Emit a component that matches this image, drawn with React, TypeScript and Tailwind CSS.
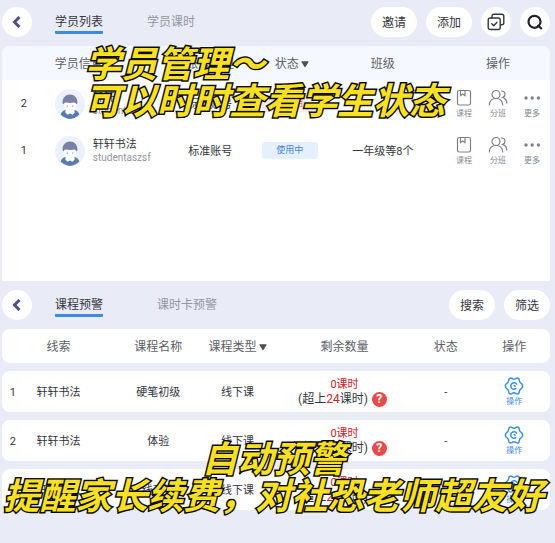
import { ReactNode } from "react";

const STUDENTS = [
  { no: 2, name: "轩轩", account: "student27", type: "标准账号", status: "已停用", active: false, classes: "" },
  { no: 1, name: "轩轩书法", account: "studentaszsf", type: "标准账号", status: "使用中", active: true, classes: "一年级等8个" },
];

const WARNINGS = [
  { no: 1, clue: "轩轩书法", course: "硬笔初级", type: "线下课", over: 24 },
  { no: 2, clue: "轩轩书法", course: "体验", type: "线下课", over: 24 },
  { no: 3, clue: "轩轩书法", course: "线下课", type: "线下课", over: 24 },
];

function BackButton() {
  return (
    <button aria-label="返回" className="w-[30px] h-[30px] shrink-0 rounded-full bg-white flex items-center justify-center">
      <svg className="w-3 h-3" viewBox="0 0 12 12" fill="none" stroke="#4d5187" strokeWidth="3">
        <path d="M8.5 1 L3.5 6 L8.5 11" />
      </svg>
    </button>
  );
}

function Tab({ label, active }: { label: string; active?: boolean }) {
  return (
    <button
      className={
        active
          ? "text-xs leading-[18px] pt-0.5 text-[#34363d] border-b-3 border-[#3d8be0] rounded-[1px]"
          : "text-xs leading-[18px] pt-0.5 text-[#93969f] border-b-3 border-transparent"
      }
    >
      {label}
    </button>
  );
}

function PillButton({ children }: { children: ReactNode }) {
  return (
    <button className="h-[30px] px-[11px] pt-0.5 rounded-full bg-white text-xs text-[#34363d]">{children}</button>
  );
}

function Caret() {
  return (
    <svg className="inline-block w-2 h-2 ml-0.5 mb-0.5" viewBox="0 0 8 8" fill="#4b4f58">
      <path d="M0.8 1.2h6.4q0.8 0 0.3 0.8L4.6 6.8q-0.6 0.8-1.2 0L0.5 2q-0.5-0.8 0.3-0.8z" />
    </svg>
  );
}

function Avatar() {
  return (
    <svg className="w-[30px] h-[30px] shrink-0" viewBox="0 0 30 30">
      <circle cx="15" cy="15" r="15" fill="#ecf1fd" />
      <path d="M5.600 25.500c1-3 2.800-4.300 5-4.600h8.800c2.200.3 4 1.600 5 4.600A15 15 0 0 1 15 30a15 15 0 0 1-9.400-4.500z" fill="#577cae" />
      <path d="M11 19.500h8l.8 4-2.300 2.300L15 24.500l-2.500 1.300-2.300-2.300z" fill="#fff" />
      <ellipse cx="15" cy="16.500" rx="6.200" ry="6" fill="#fff" />
      <path d="M7.500 13.500C7.500 8.500 10.800 5.500 15 5.500s7.500 3 7.500 8c0 .8-.3 1.400-.9 1.700-.7-1-1.500-1.500-2.400-1.700-2.800.5-5.600.5-8.400 0-.9.2-1.700.7-2.400 1.700-.6-.3-.9-.9-.9-1.700z" fill="#7b80a5" />
      <circle cx="12.200" cy="17" r="0.600" fill="#4d5187" />
      <circle cx="17.800" cy="17" r="0.600" fill="#4d5187" />
    </svg>
  );
}

function BookIcon() {
  return (
    <svg className="w-5 h-5" viewBox="0 0 20 20" fill="none" stroke="#7d8087" strokeWidth="1.200">
      <rect x="3.500" y="2.500" width="13" height="14.500" rx="1.800" />
      <path d="M6.500 2.500v5l2.200-1.600L11 7.500v-5" />
    </svg>
  );
}

function PeopleIcon() {
  return (
    <svg className="w-5 h-5" viewBox="0 0 20 20" fill="none" stroke="#7d8087" strokeWidth="1.200" strokeLinecap="round">
      <circle cx="8" cy="6.500" r="4" />
      <path d="M1.300 17c.2-3.600 2.500-6.500 6.700-6.500s6.500 2.900 6.700 6.500" />
      <path d="M13.500 3c2.200 0 3.500 1.500 3.500 3.300 0 1.500-1 2.700-2.400 3.200 2.600.7 4 2.700 4.200 5.500" />
    </svg>
  );
}

function MoreIcon() {
  return (
    <svg className="w-5 h-5" viewBox="0 0 20 20" fill="#7d8087">
      <circle cx="4" cy="10" r="1.700" />
      <circle cx="10.200" cy="10" r="1.700" />
      <circle cx="16.400" cy="10" r="1.700" />
    </svg>
  );
}

function GearIcon() {
  return (
    <svg className="w-5 h-5" viewBox="0 0 20 20" fill="none" stroke="#3b8fe0" strokeWidth="1.500" strokeLinecap="round" strokeLinejoin="round">
      <path d="M10 3.300C11.500 3.300 12 2 13.400 2S15.200 3 15.300 4.300C15.400 5.600 15.600 6.300 16.600 6.800C17.800 7.500 18.700 8.300 18.700 10S17.800 12.500 16.600 13.200C15.600 13.700 15.400 14.400 15.300 15.700C15.200 17 14.800 18 13.400 18S11.500 16.700 10 16.700S8 18 6.600 18S4.800 17 4.700 15.700C4.600 14.400 4.400 13.700 3.400 13.200C2.200 12.500 1.300 11.700 1.300 10S2.200 7.500 3.400 6.800C4.400 6.300 4.600 5.600 4.700 4.300C4.800 3 5.200 2 6.600 2S8.500 3.300 10 3.300z" />
      <path d="M12.600 8.200a3.200 3.200 0 1 0-.8 4.400" />
      <path d="M10.200 9.600q.8 0 .8.800" />
    </svg>
  );
}

function Action({ label, children, blue }: { label: string; children: ReactNode; blue?: boolean }) {
  return (
    <button
      className={
        blue
          ? "inline-flex flex-col items-center text-[8px] leading-3 text-[#3b86dc]"
          : "inline-flex flex-col items-center text-[8px] leading-3 text-[#85888f]"
      }
    >
      {children}
      {label}
    </button>
  );
}

function StudentPanel() {
  return (
    <section>
      <div className="h-[46px] pl-[2px] pr-[5px] pb-0.5 flex items-center gap-[9px]">
        <BackButton />
        <nav className="flex-1 ml-3.5 flex gap-11">
          <Tab label="学员列表" active />
          <Tab label="学员课时" />
        </nav>
        <PillButton>邀请</PillButton>
        <PillButton>添加</PillButton>
        <button aria-label="批量选择" className="w-[30px] h-[30px] rounded-full bg-white flex items-center justify-center">
          <svg className="w-[18px] h-[18px]" viewBox="0 0 18 18" fill="none" stroke="#34363d" strokeWidth="1.400" strokeLinecap="round" strokeLinejoin="round">
            <path d="M5 5V3.200Q5 1.200 7 1.200h7.800q2 0 2 2v6.600q0 2-2 2H13.500" />
            <rect x="1.200" y="5" width="12" height="11.500" rx="2" />
            <path d="M4.800 10.800l1.900 1.900 3.300-3.500" />
          </svg>
        </button>
        <button aria-label="搜索" className="w-[30px] h-[30px] rounded-full bg-white flex items-center justify-center">
          <svg className="w-[18px] h-[18px]" viewBox="0 0 18 18" fill="none" stroke="#1f2126" strokeWidth="2.200">
            <circle cx="8.500" cy="8.800" r="6" />
            <path d="M11.500 12l4.300 4" />
          </svg>
        </button>
      </div>

      <div className="ml-[2px] mr-[5px] min-h-[235px] rounded-t-lg bg-white overflow-hidden">
        <table className="w-full table-fixed text-[11px] text-[#34363d] text-center">
          <colgroup>
            <col className="w-[8%]" />
            <col className="w-[21%]" />
            <col className="w-[18%]" />
            <col className="w-[11%]" />
            <col className="w-[23%]" />
            <col className="w-[19%]" />
          </colgroup>
          <thead>
            <tr className="h-[34px] bg-[#f5f8fe] text-xs text-[#5c6068] *:font-normal *:pt-0.5">
              <th />
              <th className="text-left pl-[9px]">学员信息</th>
              <th>账号类型</th>
              <th className="whitespace-nowrap pl-1">状态<Caret /></th>
              <th>班级</th>
              <th>操作</th>
            </tr>
          </thead>
          <tbody>
            {STUDENTS.map((s) => (
              <tr key={s.no} className="h-[47px]">
                <td className="pt-0.5">{s.no}</td>
                <td className="pl-[9px]">
                  <div className="flex items-center gap-2 text-left">
                    <Avatar />
                    <div className="leading-[13px]">
                      <p>{s.name}</p>
                      <p className="text-[10px] text-[#93969f]">{s.account}</p>
                    </div>
                  </div>
                </td>
                <td className="pt-[3px]">{s.type}</td>
                <td>
                  <span
                    className={
                      s.active
                        ? "block mx-[2px] rounded-[3px] bg-[#e6effd] text-[#3f86e0] text-[9px] leading-[17px]"
                        : "block mx-[2px] rounded-[3px] bg-[#fdecee] text-[#e0626b] text-[9px] leading-[17px]"
                    }
                  >
                    {s.status}
                  </span>
                </td>
                <td className="pt-[3px]">{s.classes}</td>
                <td>
                  <div className="flex justify-center gap-3.5">
                    <Action label="课程"><BookIcon /></Action>
                    <Action label="分班"><PeopleIcon /></Action>
                    <Action label="更多"><MoreIcon /></Action>
                  </div>
                </td>
              </tr>
            ))}
          </tbody>
        </table>
      </div>
    </section>
  );
}

function WarningPanel() {
  return (
    <section>
      <div className="h-12 pl-[2px] pr-[5px] flex items-center gap-[9px]">
        <BackButton />
        <nav className="flex-1 ml-3.5 flex gap-[54px]">
          <Tab label="课程预警" active />
          <Tab label="课时卡预警" />
        </nav>
        <PillButton>搜索</PillButton>
        <PillButton>筛选</PillButton>
      </div>

      <div className="ml-[2px] mr-[5px] -mt-2">
        <table className="w-full table-fixed border-separate border-spacing-x-0 border-spacing-y-2 text-[11px] text-[#34363d] text-center">
          <colgroup>
            <col className="w-[4%]" />
            <col className="w-[17%]" />
            <col className="w-[15%]" />
            <col className="w-[14%]" />
            <col className="w-[25%]" />
            <col className="w-[12%]" />
            <col className="w-[13%]" />
          </colgroup>
          <thead>
            <tr className="h-[34px] text-xs text-[#5c6068] *:bg-white *:font-normal *:pt-0.5">
              <th className="rounded-l-lg" />
              <th className="pr-6">线索</th>
              <th>课程名称</th>
              <th className="whitespace-nowrap">课程类型<Caret /></th>
              <th>剩余数量</th>
              <th>状态</th>
              <th className="rounded-r-lg">操作</th>
            </tr>
          </thead>
          <tbody>
            {WARNINGS.map((w) => (
              <tr key={w.no} className="h-[41px] *:bg-white">
                <td className="rounded-l-lg pt-[3px]">{w.no}</td>
                <td className="pr-6 pt-[3px]">{w.clue}</td>
                <td className="pt-[3px]">{w.course}</td>
                <td className="pt-[3px]">{w.type}</td>
                <td className="leading-[15px]">
                  <p className="text-[#cc2229]">0课时</p>
                  <p className="flex items-center justify-center gap-1 pr-1 text-xs leading-[15px]">
                    <span>(超上<span className="text-[#cc2229]">{w.over}</span>课时)</span>
                    <button aria-label="说明" className="w-[15px] h-[15px] rounded-full bg-[#e9494b] text-white text-xs leading-[15px] font-bold">?</button>
                  </p>
                </td>
                <td className="pt-[3px]">-</td>
                <td className="rounded-r-lg">
                  <Action label="操作" blue><GearIcon /></Action>
                </td>
              </tr>
            ))}
          </tbody>
        </table>
      </div>
    </section>
  );
}

const CAPTION =
  "absolute pointer-events-none whitespace-nowrap italic font-bold text-4xl leading-[37px] text-[#fbe122] [-webkit-text-stroke:3px_#0b0b0b] [paint-order:stroke_fill]";

export default function App() {
  return (
    <main className="relative min-h-screen overflow-hidden bg-[#e9ecf6] font-[Roboto,'Noto_Sans_CJK_SC',sans-serif]">
      <StudentPanel />
      <WarningPanel />

      {/* Video captions */}
      <p className={`${CAPTION} left-[85px] top-[47px]`}>
        学员管理～
        <br />
        可以时时查看学生状态
      </p>
      <p className={`${CAPTION} inset-x-0 bottom-[27px] pr-2 text-center`}>
        自动预警
        <br />
        提醒家长续费，对社恐老师超友好
      </p>
    </main>
  );
}
